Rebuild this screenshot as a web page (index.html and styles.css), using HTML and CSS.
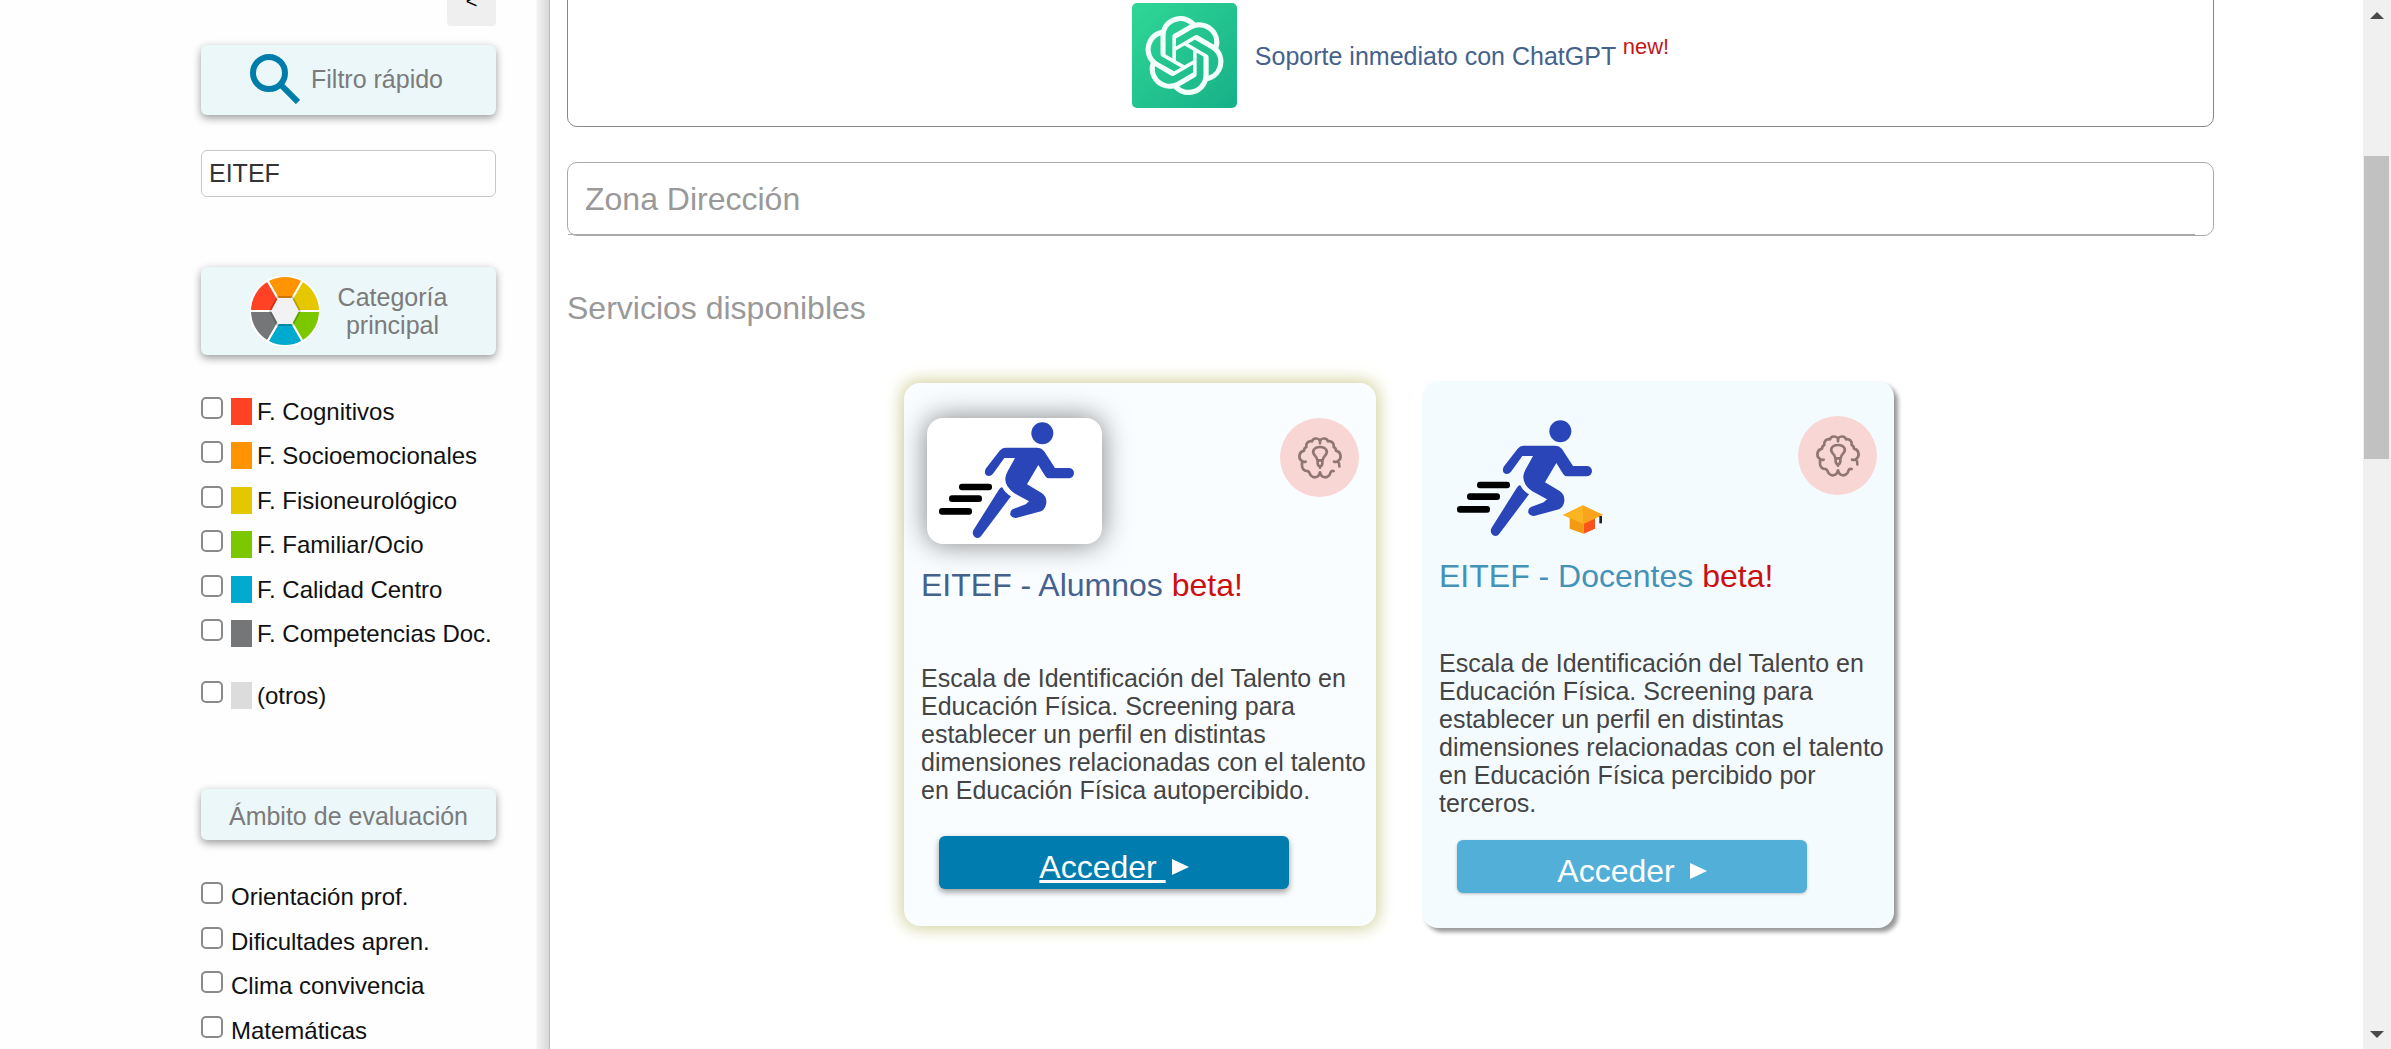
FILE: index.html
```html
<!DOCTYPE html>
<html lang="es">
<head>
    <meta charset="UTF-8">
    <meta name="viewport" content="width=device-width, initial-scale=1.0">
    <title>Servicios disponibles</title>
    <link rel="stylesheet" href="styles.css">
</head>
<body>
    <!-- Iconos compartidos por las tarjetas -->
    <svg class="sprite" aria-hidden="true">
        <symbol id="runner" viewBox="0 0 525 378">
            <g fill="#000">
                <rect x="96" y="197" width="99" height="20" rx="9"/>
                <rect x="66" y="232" width="99" height="20" rx="9"/>
                <rect x="36" y="270" width="99" height="20" rx="9"/>
            </g>
            <g fill="#2a45b8">
                <circle cx="346" cy="46" r="33"/>
                <path d="M235 89H329Q343 89 351 99L384 150H427Q441 152 441 166Q440 180 426 181H368Q358 181 354 173L334 141L300 199L344 225Q360 236 358 256Q355 275 342 280L270 299Q256 302 250 291Q248 278 258 273L296 259L306 250L262 226Q233 205 235 181Q236 171 242 160L264 120H232L198 167Q188 178 177 171Q171 164 176 152L218 98Q225 89 235 89Z"/>
                <path d="M225 207Q235 226 252 235L163 353Q155 364 143 357Q134 349 139 337L215 216Q220 208 225 207Z"/>
            </g>
        </symbol>
        <symbol id="brain" viewBox="0 0 237 237">
            <g fill="none" stroke="#8f7673" stroke-width="8" stroke-linecap="round" stroke-linejoin="round">
                <path d="M120 76V68A13 12 0 0 0 96 70A14 14 0 0 0 79 87A12 12 0 0 0 72 98A17 17 0 0 0 66 129Q70 133 77 131M66 130V142A16 16 0 0 0 83 159Q87 161 89 166A16 16 0 0 0 112 176Q118 172 120 164"/>
                <path d="M120 68A13 12 0 0 1 144 70A14 14 0 0 1 161 87A12 12 0 0 1 168 98A17 17 0 0 1 174 129Q169 133 162 131M174 131Q179 136 178 145M161 159Q153 158 151 165A16 16 0 0 1 128 176Q122 172 120 164"/>
                <path d="M112 127Q111 119 105 113Q98 106 100 98Q105 87 120 87Q135 87 140 98Q142 106 135 113Q129 119 128 127ZM113 129V138Q115 144 120 146Q125 144 127 138V129M120 146V149"/>
            </g>
        </symbol>
        <symbol id="play" viewBox="0 0 17 16">
            <path d="M0 0L17 8L0 16Z" fill="currentColor"/>
        </symbol>
    </svg>

    <div class="page">
        <!-- Barra lateral de filtros -->
        <aside class="sidebar">
            <button type="button" class="collapse-btn">&lt;</button>

            <label class="filter-title search-title" for="quickFilter">
                <svg class="search-icon" viewBox="0 0 50 50" aria-hidden="true">
                    <g fill="none" stroke="#007cab" stroke-width="6">
                        <circle cx="19" cy="19" r="16"/>
                        <path d="M31 31L48 48"/>
                    </g>
                </svg>
                Filtro rápido
            </label>
            <input type="text" class="quick-filter" id="quickFilter" value="EITEF">

            <div class="filter-title category-title">
                <svg class="wheel-icon" viewBox="-35 -35 70 70" aria-hidden="true">
                    <circle r="35" fill="#fff"/>
                    <g stroke="#fff" stroke-width="2">
                        <path d="M0 0L-17.500 -30.300A35 35 0 0 1 17.500 -30.300Z" fill="#ff9300"/>
                        <path d="M0 0L17.500 -30.300A35 35 0 0 1 35 0Z" fill="#e5c700"/>
                        <path d="M0 0L35 0A35 35 0 0 1 17.500 30.300Z" fill="#7bc800"/>
                        <path d="M0 0L17.500 30.300A35 35 0 0 1 -17.500 30.300Z" fill="#00aacf"/>
                        <path d="M0 0L-17.500 30.300A35 35 0 0 1 -35 0Z" fill="#757678"/>
                        <path d="M0 0L-35 0A35 35 0 0 1 -17.500 -30.300Z" fill="#ff4124"/>
                    </g>
                    <path d="M-16 0L-8 -15H8L16 0L8 15H-8Z" fill="#000" opacity="0.2"/>
                    <path d="M-14 0L-7 -13H7L14 0L7 13H-7Z" fill="#f2f2f4"/>
                </svg>
                <span>Categoría<br>principal</span>
            </div>
            <ul class="check-list category-list">
                <li><label><input type="checkbox"><span class="swatch cognitivos"></span>F. Cognitivos</label></li>
                <li><label><input type="checkbox"><span class="swatch socioemocionales"></span>F. Socioemocionales</label></li>
                <li><label><input type="checkbox"><span class="swatch fisioneurologico"></span>F. Fisioneurológico</label></li>
                <li><label><input type="checkbox"><span class="swatch familiar"></span>F. Familiar/Ocio</label></li>
                <li><label><input type="checkbox"><span class="swatch calidad"></span>F. Calidad Centro</label></li>
                <li><label><input type="checkbox"><span class="swatch competencias"></span>F. Competencias Doc.</label></li>
            </ul>
            <div class="check-list others">
                <label><input type="checkbox"><span class="swatch otros"></span>(otros)</label>
            </div>

            <div class="filter-title scope-title">Ámbito de evaluación</div>
            <ul class="check-list scope-list">
                <li><label><input type="checkbox">Orientación prof.</label></li>
                <li><label><input type="checkbox">Dificultades apren.</label></li>
                <li><label><input type="checkbox">Clima convivencia</label></li>
                <li><label><input type="checkbox">Matemáticas</label></li>
            </ul>
        </aside>

        <!-- Contenido -->
        <main class="content">
            <section class="panel support">
                <svg class="gpt-icon" viewBox="0 0 105 105" aria-hidden="true">
                    <defs>
                        <linearGradient id="gptGreen" x1="0" y1="0" x2="1" y2="1">
                            <stop offset="0" stop-color="#2fd796"/>
                            <stop offset="1" stop-color="#17b088"/>
                        </linearGradient>
                    </defs>
                    <rect width="105" height="105" rx="5" fill="url(#gptGreen)"/>
                    <svg x="13" y="13" width="79" height="79" viewBox="0 0 24 24">
                        <path fill="#f2fffb" d="M22.2819 9.8211a5.9847 5.9847 0 0 0-.5157-4.9108 6.0462 6.0462 0 0 0-6.5098-2.9A6.0651 6.0651 0 0 0 4.9807 4.1818a5.9847 5.9847 0 0 0-3.9977 2.9 6.0462 6.0462 0 0 0 .7427 7.0966 5.98 5.98 0 0 0 .511 4.9107 6.051 6.051 0 0 0 6.5146 2.9001A5.9847 5.9847 0 0 0 13.2599 24a6.0557 6.0557 0 0 0 5.7718-4.2058 5.9894 5.9894 0 0 0 3.9977-2.9001 6.0557 6.0557 0 0 0-.7475-7.0729zm-9.022 12.6081a4.4755 4.4755 0 0 1-2.8764-1.0408l.1419-.0804 4.7783-2.7582a.7948.7948 0 0 0 .3927-.6813v-6.7369l2.02 1.1686a.071.071 0 0 1 .038.052v5.5826a4.504 4.504 0 0 1-4.4945 4.4944zm-9.6607-4.1254a4.4708 4.4708 0 0 1-.5346-3.0137l.142.0852 4.783 2.7582a.7712.7712 0 0 0 .7806 0l5.8428-3.3685v2.3324a.0804.0804 0 0 1-.0332.0615L9.74 19.9502a4.4992 4.4992 0 0 1-6.1408-1.6464zM2.3408 7.8956a4.485 4.485 0 0 1 2.3655-1.9728V11.6a.7664.7664 0 0 0 .3879.6765l5.8144 3.3543-2.0201 1.1685a.0757.0757 0 0 1-.071 0l-4.8303-2.7865A4.504 4.504 0 0 1 2.3408 7.872zm16.5963 3.8558L13.1038 8.364 15.1192 7.2a.0757.0757 0 0 1 .071 0l4.8303 2.7913a4.4944 4.4944 0 0 1-.6765 8.1042v-5.6772a.79.79 0 0 0-.407-.667zm2.0107-3.0231l-.142-.0852-4.7735-2.7818a.7759.7759 0 0 0-.7854 0L9.409 9.2297V6.8974a.0662.0662 0 0 1 .0284-.0615l4.8303-2.7866a4.4992 4.4992 0 0 1 6.6802 4.66zM8.3065 12.863l-2.02-1.1638a.0804.0804 0 0 1-.038-.0567V6.0742a4.4992 4.4992 0 0 1 7.3757-3.4537l-.142.0805L8.704 5.459a.7948.7948 0 0 0-.3927.6813zm1.0976-2.3654l2.602-1.4998 2.6069 1.4998v2.9994l-2.5974 1.4997-2.6067-1.4997Z"/>
                    </svg>
                </svg>
                <a href="#" class="support-link">Soporte inmediato con ChatGPT <sup>new!</sup></a>
            </section>

            <section class="panel direction">
                <h2>Zona Dirección</h2>
            </section>

            <h2 class="services-title">Servicios disponibles</h2>

            <div class="services">
                <article class="card active">
                    <div class="card-top">
                        <div class="card-image">
                            <svg viewBox="0 0 525 378" aria-hidden="true"><use href="#runner"/></svg>
                        </div>
                        <div class="badge"><svg viewBox="0 0 237 237" aria-hidden="true"><use href="#brain"/></svg></div>
                    </div>
                    <h3>EITEF - Alumnos <span class="beta">beta!</span></h3>
                    <p>Escala de Identificación del Talento en Educación Física. Screening para establecer un perfil en distintas dimensiones relacionadas con el talento en Educación Física autopercibido.</p>
                    <a href="#" class="access-btn"><span>Acceder </span><svg aria-hidden="true"><use href="#play"/></svg></a>
                </article>

                <article class="card">
                    <div class="card-top">
                        <div class="card-image">
                            <svg viewBox="0 0 525 378" aria-hidden="true">
                                <use href="#runner"/>
                                <path d="M374 305V338L416 353V320Z" fill="#f39a12"/>
                                <path d="M450 305V338L416 353V320Z" fill="#f9521c"/>
                                <path d="M414 268L474 296L416 324L354 297Z" fill="#f9a51c"/>
                                <path d="M414 268V323L354 297Z" fill="#fbb523"/>
                                <path d="M467 300V322" stroke="#222" stroke-width="8"/>
                            </svg>
                        </div>
                        <div class="badge"><svg viewBox="0 0 237 237" aria-hidden="true"><use href="#brain"/></svg></div>
                    </div>
                    <h3>EITEF - Docentes <span class="beta">beta!</span></h3>
                    <p>Escala de Identificación del Talento en Educación Física. Screening para establecer un perfil en distintas dimensiones relacionadas con el talento en Educación Física percibido por terceros.</p>
                    <a href="#" class="access-btn"><span>Acceder </span><svg aria-hidden="true"><use href="#play"/></svg></a>
                </article>
            </div>
        </main>

        <!-- Barra de desplazamiento -->
        <div class="scrollbar" aria-hidden="true">
            <svg class="arrow" viewBox="0 0 28 28"><path d="M7 19L14 12L21 19Z" fill="#4a4a4a"/></svg>
            <div class="track"><div class="thumb"></div></div>
            <svg class="arrow" viewBox="0 0 28 28"><path d="M7 10L14 17L21 10Z" fill="#4a4a4a"/></svg>
        </div>
    </div>
</body>
</html>
```
FILE: styles.css
```css
* {
    margin: 0;
    padding: 0;
    box-sizing: border-box;
}

body {
    font-family: "Liberation Sans", Arial, Helvetica, sans-serif;
    font-size: 25px;
    line-height: 28px;
    color: #111;
    background: #fff;
}

svg {
    display: block;
}

ul {
    list-style: none;
}

a {
    text-decoration: none;
}

.sprite {
    display: none;
}

.page {
    display: flex;
    height: 100vh;
    overflow: hidden;
}

/* Barra lateral */
.sidebar {
    display: flex;
    flex-direction: column;
    flex: 0 0 550px;
    padding: 0 53px 0 201px;
    border-right: 1px solid #b8b8b8;
    background: linear-gradient(to left, #d8d8d8, #f2f2f2 12px, #fefefe 13px);
}

.collapse-btn {
    flex: none;
    align-self: flex-end;
    width: 49px;
    height: 40px;
    margin-top: -14px;
    padding-bottom: 10px;
    border: none;
    border-radius: 4px;
    background: #efefef;
    font: inherit;
    font-size: 20px;
    line-height: 24px;
}

.filter-title {
    display: flex;
    align-items: center;
    justify-content: center;
    border-radius: 6px;
    background: #ebf7f9;
    box-shadow: 0 3px 8px rgba(0, 0, 0, 0.4);
    color: #7b7b7b;
    text-align: center;
}

.search-title {
    gap: 11px;
    margin-top: 19px;
    padding: 9px 4px 11px 0;
}

.search-icon {
    width: 50px;
    height: 50px;
}

.quick-filter {
    width: 100%;
    height: 47px;
    margin-top: 35px;
    padding: 0 7px;
    border: 1px solid #c8c8c8;
    border-radius: 6px;
    font: inherit;
    color: #333;
}

.category-title {
    gap: 18px;
    margin-top: 70px;
    padding: 9px 0;
}

.wheel-icon {
    width: 70px;
    height: 70px;
}

.scope-title {
    margin-top: 80px;
    padding: 13px 0 10px;
}

.check-list {
    font-size: 24px;
}

.category-list,
.scope-list {
    display: flex;
    flex-direction: column;
    justify-content: space-between;
    margin-top: 42px;
}

.category-list {
    min-height: 250px;
}

.scope-list {
    min-height: 162px;
}

.others {
    margin-top: 34px;
}

.check-list label {
    display: flex;
    height: 28px;
    line-height: 30px;
    white-space: nowrap;
}

.check-list input {
    appearance: none;
    width: 22px;
    height: 22px;
    margin-right: 8px;
    border: 2px solid #8a8a8a;
    border-radius: 5px;
    background: #fff;
}

.swatch {
    align-self: flex-end;
    width: 21px;
    height: 27px;
    margin-right: 5px;
}

.cognitivos { background: #ff4124; }
.socioemocionales { background: #ff9300; }
.fisioneurologico { background: #e5c700; }
.familiar { background: #7bc800; }
.calidad { background: #00aacf; }
.competencias { background: #757678; }
.otros { background: #dcdcdc; }

/* Contenido */
.content {
    flex: 1;
    padding: 0 149px 0 17px;
}

.panel {
    border: 1px solid #aaa;
    border-radius: 10px;
}

.support {
    display: flex;
    align-items: center;
    justify-content: center;
    gap: 18px;
    margin-top: -20px;
    padding: 22px 0 18px 20px;
    border-color: #888;
}

.gpt-icon {
    width: 105px;
    height: 105px;
}

.support-link {
    color: #44628c;
}

.support-link sup {
    font-size: 22px;
    line-height: 0;
    vertical-align: 11px;
    color: #c4161c;
}

h2,
h3 {
    font-size: 32px;
    line-height: 36px;
    font-weight: normal;
}

h2 {
    color: #999;
}

.direction {
    margin-top: 35px;
}

.direction h2 {
    margin-right: 18px;
    padding: 18px 17px 17px;
    border-bottom: 1px solid #aaa;
}

.services-title {
    margin-top: 54px;
}

.services {
    display: flex;
    align-items: center;
    justify-content: center;
    gap: 46px;
    margin-top: 55px;
    padding-left: 17px;
}

.card {
    flex: 0 1 472px;
    padding: 35px 7px 35px 17px;
    border-radius: 16px;
    background: #f4fbff;
    box-shadow: 4px 4px 4px #999;
}

.card.active {
    padding-bottom: 37px;
    background: #fafdff;
    box-shadow: 0 0 16px 3px #d3d3a0;
}

.card-top {
    display: flex;
    justify-content: space-between;
    align-items: flex-start;
    padding: 0 10px 0 6px;
}

.card-image {
    width: 175px;
    height: 126px;
    border-radius: 16px;
}

.active .card-image {
    background: #fff;
    box-shadow: 0 0 28px rgba(0, 0, 0, 0.5);
}

.badge {
    width: 79px;
    height: 79px;
    border-radius: 50%;
    background: #f8d6d4;
}

.card h3 {
    margin-top: 16px;
    color: #4592b8;
}

.card p {
    margin-top: 55px;
    color: #444;
}

.card .beta {
    color: #cc1010;
}

.access-btn {
    display: flex;
    align-items: center;
    justify-content: center;
    gap: 6px;
    width: 350px;
    margin: 23px 0 0 18px;
    padding: 13px 0 4px;
    border-radius: 6px;
    background: #52b0d8;
    box-shadow: 0 1px 3px rgba(0, 0, 0, 0.25);
    color: #fff;
    font-size: 32px;
    line-height: 36px;
}

.access-btn span {
    white-space: pre;
}

.access-btn svg {
    width: 17px;
    height: 16px;
}

.card.active h3 {
    margin-top: 23px;
    color: #44628c;
}

.card.active p {
    margin-top: 61px;
}

.active .access-btn {
    margin-top: 32px;
    background: #007cae;
    box-shadow: 0 3px 6px rgba(0, 0, 0, 0.4);
}

.active .access-btn span {
    text-decoration: underline;
    text-decoration-thickness: 3px;
}

/* Barra de desplazamiento */
.scrollbar {
    display: flex;
    flex-direction: column;
    flex: 0 0 28px;
    background: #f0f0f0;
}

.arrow {
    width: 28px;
    height: 28px;
}

.track {
    flex: 1;
    padding: 128px 2px 0 1px;
}

.thumb {
    height: 303px;
    background: #c1c1c1;
}
```
